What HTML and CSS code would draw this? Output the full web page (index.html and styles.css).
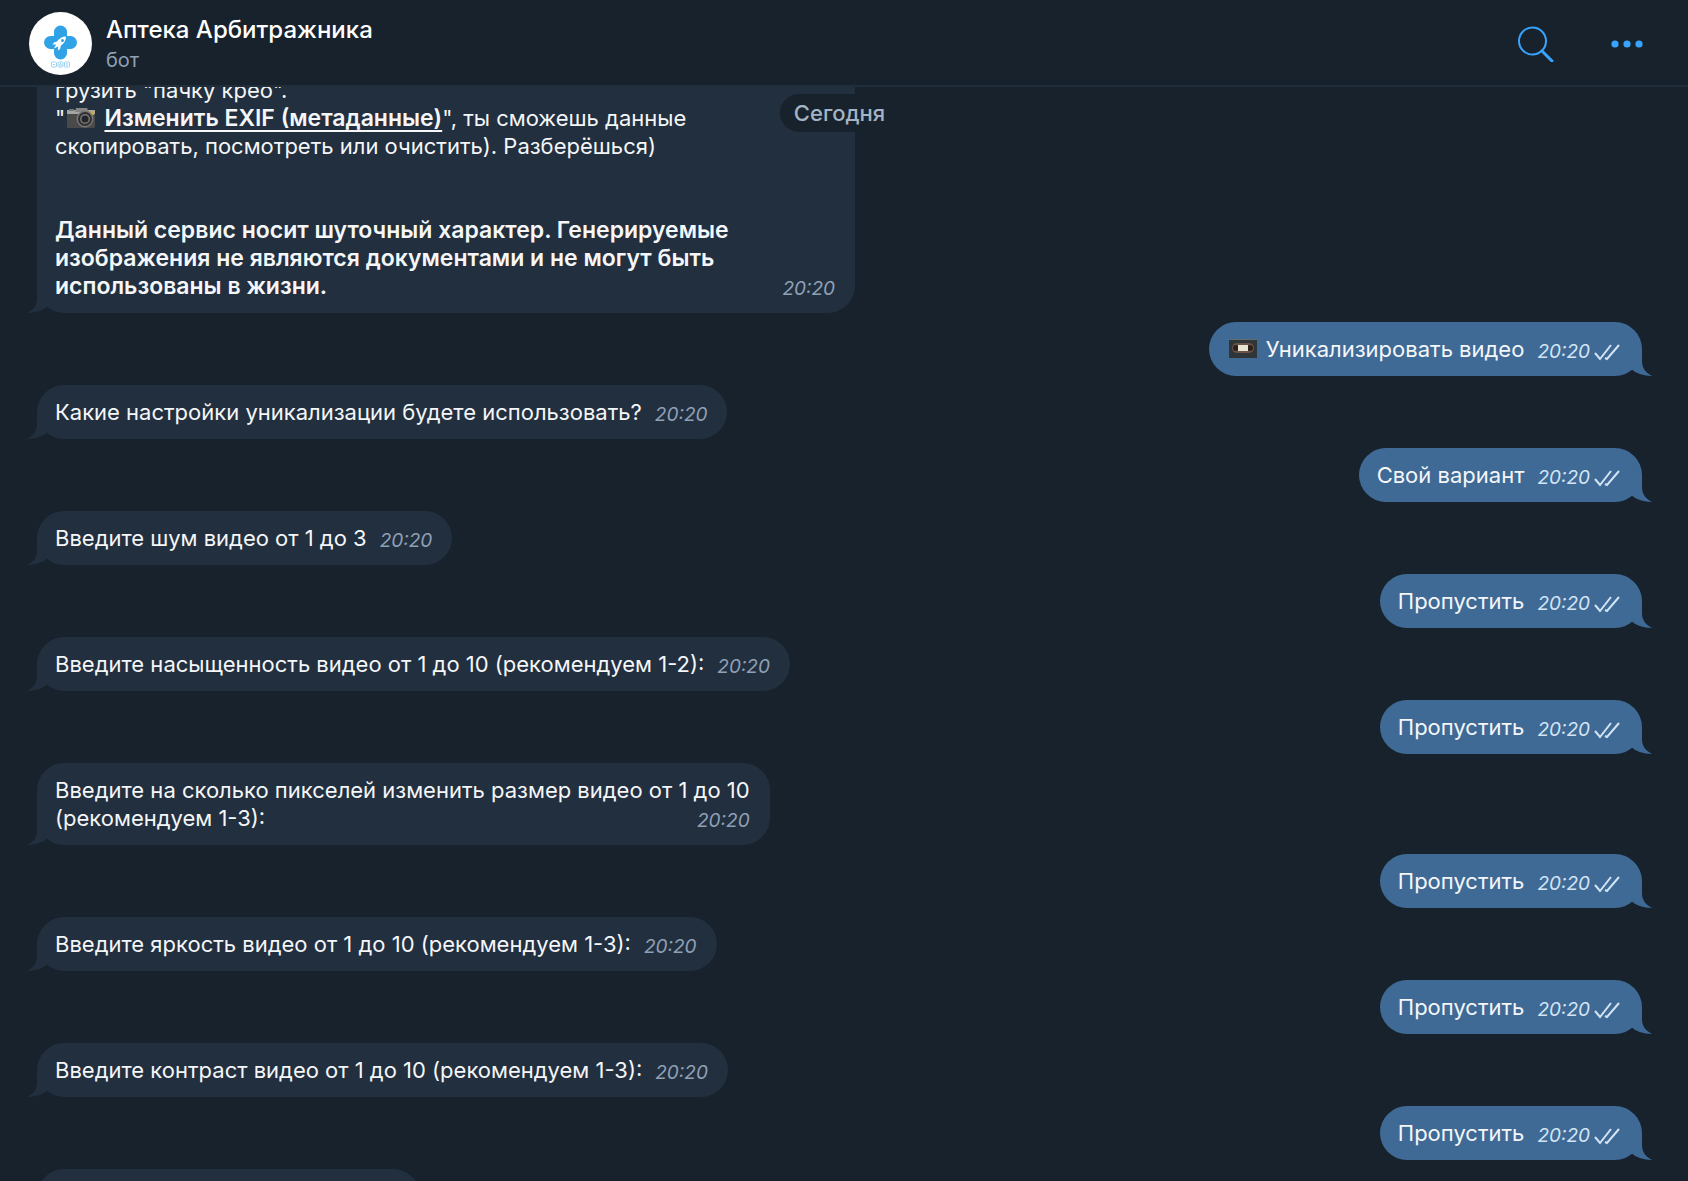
FILE: index.html
```html
<!DOCTYPE html>
<html lang="ru">
<head>
    <meta charset="UTF-8">
    <meta name="viewport" content="width=device-width, initial-scale=1.0">
    <title>Аптека Арбитражника</title>
    <link rel="stylesheet" href="styles.css">
</head>
<body>
    <svg class="sprite" aria-hidden="true">
        <symbol id="checks" viewBox="0 0 26 18">
            <path d="M1 10l5 6L17 2M11 15l2 1L25 2" fill="none" stroke="currentColor" stroke-width="2"/>
        </symbol>
    </svg>

    <header class="header">
        <svg class="avatar" viewBox="0 0 63 63" aria-hidden="true">
            <circle cx="31.500" cy="31.500" r="31.500" fill="#fff"/>
            <g fill="#30a3e6">
                <circle cx="31.500" cy="20" r="6.500"/>
                <circle cx="31.500" cy="41" r="6.500"/>
                <circle cx="21.500" cy="30.500" r="6.500"/>
                <circle cx="41.500" cy="30.500" r="6.500"/>
                <path d="M25 20h13v21H25z"/>
                <path d="M21.500 24h20v13h-20z"/>
            </g>
            <path d="M37 24.500c-4 0-7 2-9 5l-3 1-1.500 2 3.500 0-2 4 4-2v4l2-1.500 1-3.500c3-2 5-5 5-9z" fill="#fff"/>
            <circle cx="33.500" cy="28.500" r="1.500" fill="#30a3e6"/>
            <g fill="none" stroke="#9bd3f2">
                <rect x="22.500" y="50" width="5" height="5" rx="1"/>
                <rect x="29" y="50" width="5" height="5" rx="1"/>
                <rect x="35.500" y="50" width="5" height="5" rx="1"/>
                <path d="M24 52.500h2M30.500 54l1-3 1 3M38 51v3"/>
            </g>
        </svg>
        <div class="title">
            <h1>Аптека Арбитражника</h1>
            <p>бот</p>
        </div>
        <div class="actions">
            <button type="button" aria-label="Поиск">
                <svg viewBox="0 0 36 36" width="36" height="36">
                    <circle cx="14.500" cy="15" r="13.500" fill="none" stroke="currentColor" stroke-width="2"/>
                    <path d="M24 25l10 10" stroke="currentColor" stroke-width="3" stroke-linecap="round"/>
                </svg>
            </button>
            <button type="button" aria-label="Меню">
                <svg viewBox="0 0 34 36" width="34" height="36" fill="currentColor">
                    <circle cx="5" cy="18" r="3.600"/>
                    <circle cx="17" cy="18" r="3.600"/>
                    <circle cx="29" cy="18" r="3.600"/>
                </svg>
            </button>
        </div>
    </header>

    <main class="chat">
        <div class="date">Сегодня</div>

        <div class="message in wide">
            <br>грузить "пачку крео".<br>
            "<svg class="emoji" viewBox="0 0 28 20" aria-hidden="true"><rect y="2" width="28" height="18" rx="1" fill="#4a4a4a"/><path d="M0 2h28v4H0z" fill="#a5a5a3"/><path d="M9 0h11l2 4H8z" fill="#858583"/><path d="M2 1h5v2H2z" fill="#777"/><rect x="23" y="3" width="4" height="4" fill="#cba84c"/><circle cx="18" cy="11" r="8.500" fill="#777"/><circle cx="18" cy="11" r="7" fill="#303030"/><circle cx="18" cy="11" r="5" fill="#777"/><circle cx="18" cy="11" r="3.500" fill="#23252b"/></svg> <b><u>Изменить EXIF (метаданные)</u></b>", ты сможешь данные<br>
            скопировать, посмотреть или очистить). Разберёшься)<br>
            <br>
            <br>
            <b>Данный сервис носит шуточный характер. Генерируемые<br>
            изображения не являются документами и не могут быть<br>
            использованы в жизни.</b>
            <span class="time">20:20</span>
        </div>
        <div class="message out">
            <svg class="emoji" viewBox="0 0 28 20" aria-hidden="true"><rect width="28" height="19" fill="#303538"/><path d="M0 0h28v1H0z" fill="#656c70"/><rect x="3" y="4" width="22" height="10" rx="5" fill="#6b5348"/><circle cx="7" cy="9" r="3" fill="#2d211d"/><circle cx="21" cy="9" r="3" fill="#2d211d"/><rect x="9" y="6" width="10" height="6" fill="#e9e5d5"/></svg>
            Уникализировать видео
            <span class="time">20:20<svg class="checks"><use href="#checks"/></svg></span>
        </div>
        <div class="message in">Какие настройки уникализации будете использовать? <span class="time">20:20</span></div>
        <div class="message out">Свой вариант <span class="time">20:20<svg class="checks"><use href="#checks"/></svg></span></div>
        <div class="message in">Введите шум видео от 1 до 3 <span class="time">20:20</span></div>
        <div class="message out">Пропустить <span class="time">20:20<svg class="checks"><use href="#checks"/></svg></span></div>
        <div class="message in">Введите насыщенность видео от 1 до 10 (рекомендуем 1-2): <span class="time">20:20</span></div>
        <div class="message out">Пропустить <span class="time">20:20<svg class="checks"><use href="#checks"/></svg></span></div>
        <div class="message in">
            Введите на сколько пикселей изменить размер видео от 1 до 10<br>
            (рекомендуем 1-3):
            <span class="time">20:20</span>
        </div>
        <div class="message out">Пропустить <span class="time">20:20<svg class="checks"><use href="#checks"/></svg></span></div>
        <div class="message in">Введите яркость видео от 1 до 10 (рекомендуем 1-3): <span class="time">20:20</span></div>
        <div class="message out">Пропустить <span class="time">20:20<svg class="checks"><use href="#checks"/></svg></span></div>
        <div class="message in">Введите контраст видео от 1 до 10 (рекомендуем 1-3): <span class="time">20:20</span></div>
        <div class="message out">Пропустить <span class="time">20:20<svg class="checks"><use href="#checks"/></svg></span></div>
        <div class="message in next"></div>
    </main>
</body>
</html>
```
FILE: styles.css
```css
:root {
    --background: #18222c;
    --bubble-in: #222f3f;
    --bubble-out: #3f6a96;
    --accent: #38a4ff;
    --muted: #8fa0b5;
}

* {
    box-sizing: border-box;
    margin: 0;
    padding: 0;
}

body {
    height: 100vh;
    overflow: hidden;
    background-color: var(--background);
    color: #f4f6f8;
    font-family: Inter, "Noto Sans", sans-serif;
    font-size: 22px;
    line-height: 28px;
}

.sprite {
    position: absolute;
    width: 0;
    height: 0;
}

.header {
    position: relative;
    z-index: 2;
    display: flex;
    align-items: center;
    gap: 14px;
    height: 87px;
    padding: 2px 44px 0 29px;
    background-color: var(--background);
    border-bottom: 2px solid #202d3a;
}

.avatar {
    flex: none;
    width: 63px;
    height: 63px;
}

.title {
    flex: 1;
}

.title h1 {
    font-size: 24px;
    font-weight: 500;
    line-height: 32px;
    color: #fff;
}

.title p {
    font-size: 20px;
    color: var(--muted);
}

.actions {
    display: flex;
    gap: 56px;
}

.actions button {
    display: flex;
    border: none;
    background: none;
    color: var(--accent);
    cursor: pointer;
}

.chat {
    position: relative;
    display: flex;
    flex-direction: column;
    align-items: flex-start;
    gap: 9px;
    margin-top: -52px;
    padding: 0 46px 0 37px;
}

.date {
    position: absolute;
    z-index: 1;
    top: 59px;
    left: 37px;
    right: 46px;
    width: fit-content;
    margin: 0 auto;
    padding: 5px 14px;
    border-radius: 19px;
    background-color: var(--background);
    color: #a3b4c6;
    font-weight: 500;
}

.message {
    position: relative;
    max-width: 818px;
    min-height: 54px;
    padding: 13px 20px 13px 18px;
    border-radius: 27px;
}

/* bubble tail */
.message::after {
    content: "";
    position: absolute;
    bottom: 0;
    left: -10px;
    width: 30px;
    height: 27px;
    background-color: inherit;
    clip-path: path("M10 0 V13 Q10 22 0 27 Q13 27 21 20 L30 10 V0 Z");
    z-index: -1;
}

.in {
    background-color: var(--bubble-in);
}

.out {
    align-self: flex-end;
    padding-right: 22px;
    background-color: var(--bubble-out);
}

.out::after {
    left: auto;
    right: -10px;
    transform: scaleX(-1);
}

.wide {
    width: 100%;
}

.next {
    width: 383px;
}

.message b {
    font-size: 23px;
    font-weight: 600;
}

.message u {
    text-decoration-thickness: 2px;
    text-underline-offset: 4px;
}

.emoji {
    width: 28px;
    height: 20px;
    margin: 0 3px 0 2px;
    vertical-align: -2px;
}

.time {
    float: right;
    display: flex;
    align-items: center;
    gap: 4px;
    margin: 3px 0 -3px 13px;
    color: var(--muted);
    font-size: 19px;
    font-style: italic;
}

.out .time {
    color: #d3e4f4;
}

.checks {
    width: 26px;
    height: 18px;
}
```
